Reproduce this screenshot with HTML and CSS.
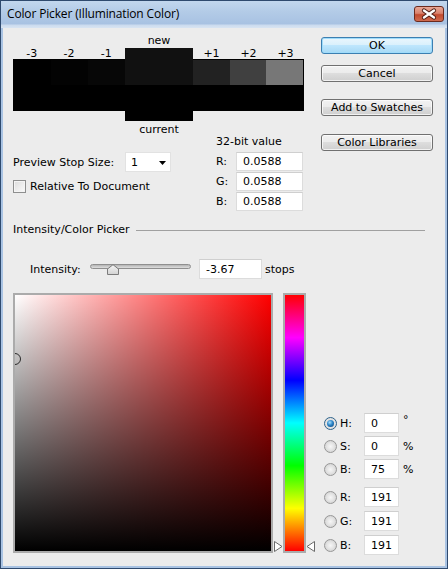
FILE: index.html
```html
<!DOCTYPE html>
<html>
<head>
<meta charset="utf-8">
<title>Color Picker</title>
<link rel="stylesheet" href="styles.css">
</head>
<body>
<div class="window">
  <div class="titlebar">
    <span class="title">Color Picker (Illumination Color)</span>
    <div class="close">
      <svg width="28" height="14" viewBox="0 0 28 14">
        <path d="M9 3.5 L19 10.5 M19 3.5 L9 10.5" stroke="#4b1a12" stroke-width="4.2" stroke-linecap="round" fill="none"/>
        <path d="M9 3.5 L19 10.5 M19 3.5 L9 10.5" stroke="#ffffff" stroke-width="2.4" stroke-linecap="round" fill="none"/>
      </svg>
    </div>
  </div>
  <div class="client">
    <div class="top">
      <div class="topleft">
        <div class="swatches">
          <div class="grp grp-l">
            <div class="labels"><span>-3</span><span>-2</span><span>-1</span></div>
            <div class="strip">
              <div class="srow"><i class="s m3"></i><i class="s m2"></i><i class="s m1"></i></div>
              <div class="srow"><i class="s"></i><i class="s"></i><i class="s"></i></div>
            </div>
          </div>
          <div class="center">
            <div class="clabel">new</div>
            <div class="newsw"></div>
            <div class="cursw"></div>
            <div class="clabel cur">current</div>
          </div>
          <div class="grp grp-r">
            <div class="labels"><span>+1</span><span>+2</span><span>+3</span></div>
            <div class="strip">
              <div class="srow"><i class="s p1"></i><i class="s p2"></i><i class="s p3"></i></div>
              <div class="srow"><i class="s"></i><i class="s"></i><i class="s"></i></div>
            </div>
          </div>
        </div>
        <div class="settings">
          <div class="stopcol">
            <div class="stoprow">
              <span class="stoplabel">Preview Stop Size:</span>
              <div class="select"><span>1</span><svg class="arrow" width="7" height="4" viewBox="0 0 7 4"><path d="M0 0 H7 L3.5 4 Z" fill="#000"/></svg></div>
            </div>
            <div class="check"><span class="box"></span><span>Relative To Document</span></div>
          </div>
          <div class="bitcol">
            <div class="bithead">32-bit value</div>
            <div class="bitrow"><span class="bl">R:</span><div class="input bitin">0.0588</div></div>
            <div class="bitrow"><span class="bl">G:</span><div class="input bitin">0.0588</div></div>
            <div class="bitrow"><span class="bl">B:</span><div class="input bitin">0.0588</div></div>
          </div>
        </div>
      </div>
      <div class="buttons">
        <div class="btn default">OK</div>
        <div class="btn cancel">Cancel</div>
        <div class="btn add">Add to Swatches</div>
        <div class="btn libs">Color Libraries</div>
      </div>
    </div>

    <div class="section">
      <span>Intensity/Color Picker</span>
      <div class="rule"></div>
    </div>

    <div class="intensity">
      <span class="ilabel">Intensity:</span>
      <div class="slider">
        <div class="track"></div>
        <svg class="thumb" width="12" height="11" viewBox="0 0 12 11">
          <defs><linearGradient id="tg" x1="0" y1="0" x2="0" y2="1"><stop offset="0" stop-color="#f6f6f6"/><stop offset="1" stop-color="#d2d2d2"/></linearGradient></defs>
          <path d="M0.5 10.5 V5 L6 0.7 L11.5 5 V10.5 Z" fill="url(#tg)" stroke="#7c7c7c" stroke-width="1"/>
        </svg>
      </div>
      <div class="input iin">-3.67</div>
      <span class="unit">stops</span>
    </div>

    <div class="picker">
      <div class="field">
        <div class="fieldin">
          <div class="marker"></div>
        </div>
      </div>
      <div class="huewrap">
        <svg class="harrow harrow-l" width="9" height="11" viewBox="0 0 9 11"><path d="M0.5 0.5 L8 5.5 L0.5 10.5 Z" fill="#fff" stroke="#6a6a6a"/></svg>
        <div class="hue"><div class="huein"></div></div>
        <svg class="harrow harrow-r" width="9" height="11" viewBox="0 0 9 11"><path d="M8.5 0.5 L1 5.5 L8.5 10.5 Z" fill="#fff" stroke="#6a6a6a"/></svg>
      </div>
      <div class="panel">
        <div class="grp3">
          <div class="prow"><span class="radio on"></span><span class="pl">H:</span><div class="input pin">0</div><span class="pu deg">°</span></div>
          <div class="prow"><span class="radio"></span><span class="pl">S:</span><div class="input pin">0</div><span class="pu">%</span></div>
          <div class="prow"><span class="radio"></span><span class="pl">B:</span><div class="input pin">75</div><span class="pu">%</span></div>
        </div>
        <div class="grp3 rgb">
          <div class="prow"><span class="radio"></span><span class="pl">R:</span><div class="input pin">191</div></div>
          <div class="prow"><span class="radio"></span><span class="pl">G:</span><div class="input pin">191</div></div>
          <div class="prow"><span class="radio"></span><span class="pl">B:</span><div class="input pin">191</div></div>
        </div>
      </div>
    </div>
  </div>
</div>
</body>
</html>
```

FILE: styles.css
```css
* { box-sizing: border-box; }
html, body { margin: 0; padding: 0; }
body {
  width: 448px;
  height: 569px;
  overflow: hidden;
  font-family: "DejaVu Sans", "Liberation Sans", sans-serif;
  font-size: 11px;
  color: #000;
  background: #ececec;
}
.window {
  width: 448px;
  height: 569px;
  border: 1px solid #2f4a6e;
  background: #a9c3e3;
  padding: 0 2px 2px 2px;
  display: flex;
  flex-direction: column;
}
.titlebar {
  height: 27px;
  margin: 0 -2px;
  padding: 0 3px 3px 6px;
  display: flex;
  align-items: center;
  justify-content: space-between;
  background: linear-gradient(#c2d7ee 0%, #b3cbe7 40%, #a8c2e2 85%, #cbdbee 89%, #d8e4f2 100%);
}
.title {
  font-family: "Open Sans", "DejaVu Sans", sans-serif;
  font-size: 12px;
  color: #000;
  letter-spacing: -0.15px;
}
.close {
  width: 30px;
  height: 16px;
  margin-top: 2px;
  border: 1px solid #6b2a1e;
  border-radius: 3px;
  background: linear-gradient(#e8a897 0%, #d9826d 45%, #c14a2f 55%, #cf6b4f 100%);
  display: flex;
  align-items: center;
  justify-content: center;
}
.client {
  flex: 1;
  background: #ececec;
  padding: 6px 10px 0 10px;
}

/* top area */
.top { display: flex; }
.topleft { width: 291px; }
.swatches {
  display: flex;
  align-items: flex-start;
  height: 101px;
}
.grp { margin-top: 11px; }
.grp-l { width: 112px; }
.grp-r { width: 111px; }
.labels { display: flex; height: 14px; line-height: 17px; }
.labels span { flex: 1; text-align: center; }
.strip {
  height: 52px;
  border: 1px solid #000;
  background: #000;
  display: flex;
  flex-direction: column;
}
.grp-l .strip { border-right: none; }
.grp-r .strip { border-left: none; }
.srow { flex: 1; display: flex; }
.s { flex: 1; background: #000; }
.s.m3 { background: #000000; }
.s.m2 { background: #030303; }
.s.m1 { background: #070707; }
.s.p1 { background: #222222; }
.s.p2 { background: #404040; }
.s.p3 { background: #777777; }
.center { width: 68px; }
.clabel { height: 14px; line-height: 14px; text-align: center; }
.clabel.cur { line-height: 18px; }
.newsw { height: 37px; background: #111111; }
.cursw { height: 36px; background: #000; }

.settings { display: flex; }
.stopcol { width: 203px; padding-top: 17px; }
.stoprow { display: flex; align-items: center; height: 20px; }
.stoplabel { width: 112px; }
.select {
  width: 46px;
  height: 20px;
  background: #fff;
  border: 1px solid #e2e2e2;
  display: flex;
  align-items: center;
  padding-left: 5px;
  position: relative;
}
.select span { flex: 1; }
.select .arrow { margin-right: 4px; margin-top: 1px; }
.check { display: flex; align-items: center; margin-top: 8px; height: 13px; }
.box {
  width: 13px;
  height: 13px;
  border: 1px solid #8e8f8f;
  background: linear-gradient(135deg, #dcdcdc, #fbfbfb);
  margin-right: 4px;
  box-shadow: inset 0 0 0 1px #f4f4f4;
}
.bitcol { width: 88px; }
.bithead { height: 13px; line-height: 13px; margin-bottom: 4px; }
.bitrow { display: flex; align-items: center; height: 19px; margin-bottom: 1px; }
.bl { width: 20px; }
.input {
  background: #fff;
  border: 1px solid #dcdcdc;
  border-top-color: #cfcfcf;
  padding-left: 6px;
  display: flex;
  align-items: center;
}
.bitin { width: 67px; height: 19px; }

.buttons {
  margin-left: 17px;
  width: 112px;
  padding-top: 3px;
  display: flex;
  flex-direction: column;
}
.btn {
  height: 17px;
  border: 1px solid #707070;
  border-radius: 3px;
  background: linear-gradient(#f2f2f2 0%, #ebebeb 49%, #dddddd 50%, #cfcfcf 100%);
  text-align: center;
  line-height: 15px;
  box-shadow: inset 0 0 0 1px rgba(255,255,255,0.7);
}
.btn.default {
  border-color: #3c7fb1;
  background: linear-gradient(#eaf6fd 0%, #d9f0fc 49%, #bee6fd 50%, #a7d9f5 100%);
  box-shadow: inset 0 0 0 1px #9fdcfb;
}
.btn.cancel { margin-top: 11px; }
.btn.add { margin-top: 17px; }
.btn.libs { margin-top: 18px; }

/* section */
.section {
  display: flex;
  align-items: center;
  height: 15px;
  margin-top: 10px;
  margin-right: 10px;
}
.rule { flex: 1; height: 1px; background: #a0a0a0; margin-left: 6px; margin-top: 1px; }

.intensity {
  display: flex;
  align-items: center;
  height: 20px;
  margin-top: 22px;
  padding-left: 17px;
}
.ilabel { width: 60px; }
.slider { width: 101px; height: 20px; position: relative; }
.track {
  margin-top: 5px;
  height: 5px;
  border: 1px solid #8f8f8f;
  border-radius: 3px;
  background: linear-gradient(#b4b4b4, #dedede);
}
.thumb { position: absolute; left: 17px; top: 5px; }
.iin { width: 63px; height: 20px; margin-left: 8px; }
.unit { margin-left: 3px; }

/* picker */
.picker { display: flex; margin-top: 14px; }
.field {
  width: 260px;
  height: 260px;
  border: 2px solid #ababab;
}
.fieldin {
  width: 256px;
  height: 256px;
  position: relative;
  overflow: hidden;
  background: linear-gradient(to top, #000 0%, rgba(0,0,0,0) 100%), linear-gradient(to right, #fff 0%, #f00 100%);
}
.marker {
  position: absolute;
  left: -6px;
  top: 58px;
  width: 12px;
  height: 12px;
  border: 1.5px solid #2a2a2a;
  border-radius: 50%;
}
.huewrap { position: relative; margin-left: 10px; }
.hue {
  width: 23px;
  height: 260px;
  border: 2px solid #ababab;
}
.huein {
  width: 19px;
  height: 256px;
  background: linear-gradient(to bottom, #f00 0%, #f0f 16.67%, #00f 33.33%, #0ff 50%, #0f0 66.67%, #ff0 83.33%, #f00 100%);
}
.harrow { position: absolute; top: 248px; }
.harrow-l { left: -9px; }
.harrow-r { right: -9px; }

.panel { padding-left: 18px; padding-top: 120px; }
.grp3 { display: flex; flex-direction: column; gap: 3px; }
.grp3.rgb { margin-top: 8px; gap: 4px; }
.prow { display: flex; align-items: center; height: 20px; }
.radio {
  width: 13px;
  height: 13px;
  border-radius: 50%;
  border: 1px solid #979797;
  background: radial-gradient(circle at 50% 50%, #f6f6f6 0%, #e4e4e4 45%, #c9c9c9 100%);
  margin-right: 3px;
  position: relative;
}
.radio.on {
  border-color: #2c628b;
  background: radial-gradient(circle at 50% 50%, #eaeaea 0%, #dddddd 100%);
}
.radio.on::after {
  content: "";
  position: absolute;
  left: 2px;
  top: 2px;
  width: 7px;
  height: 7px;
  border-radius: 50%;
  background: radial-gradient(circle at 40% 35%, #a9e0fb 0%, #2a84c8 45%, #0c3e6e 100%);
}
.pl { width: 24px; }
.pin { width: 35px; height: 20px; }
.pu { margin-left: 4px; }
.pu.deg { margin-top: -8px; }
```
